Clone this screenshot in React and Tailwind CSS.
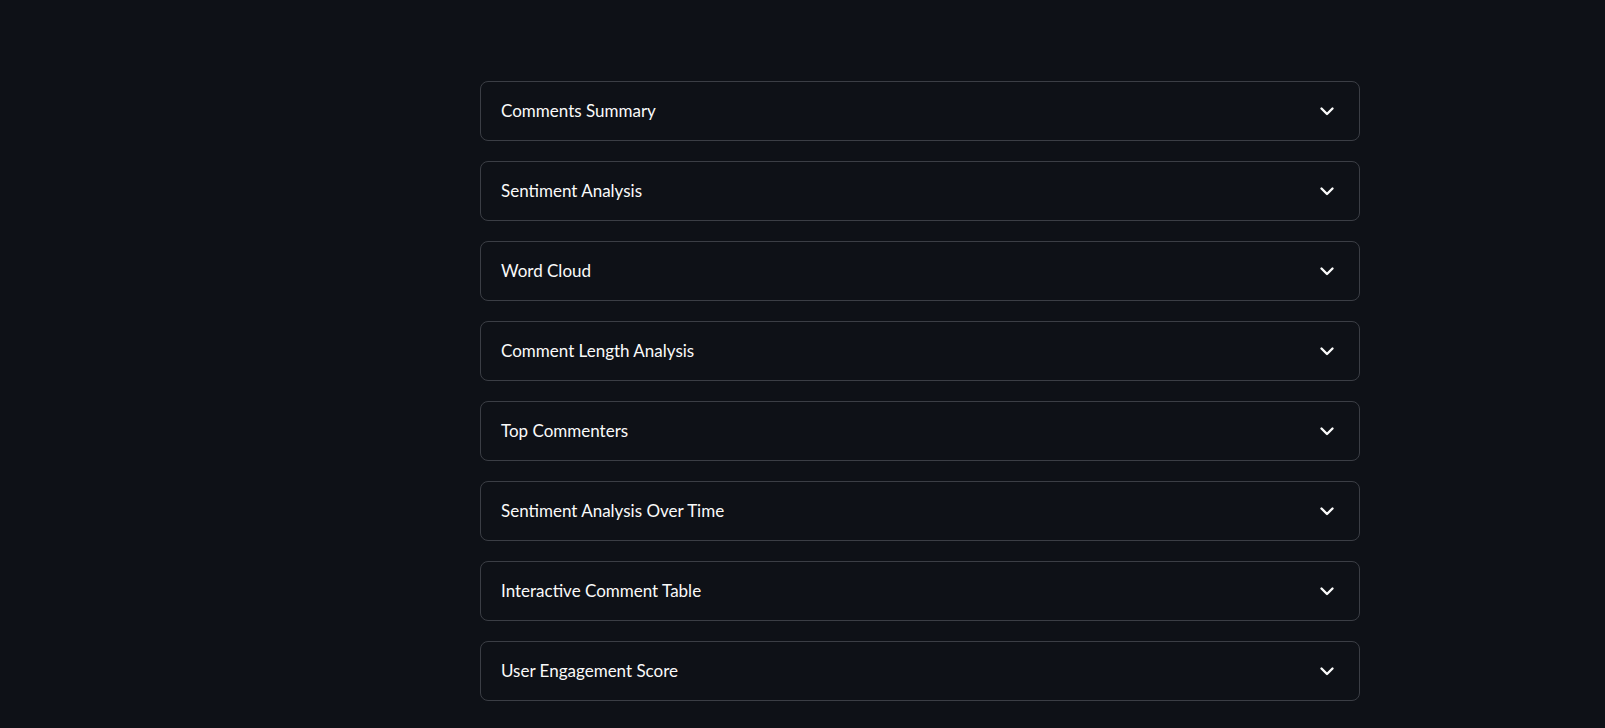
const sections = [
  'Comments Summary',
  'Sentiment Analysis',
  'Word Cloud',
  'Comment Length Analysis',
  'Top Commenters',
  'Sentiment Analysis Over Time',
  'Interactive Comment Table',
  'User Engagement Score',
]

function Chevron() {
  return (
    <svg width="24" height="24" viewBox="0 0 24 24" fill="none" stroke="currentColor" strokeWidth="2.4" strokeLinecap="round" strokeLinejoin="round">
      <path d="m6.5 9.5 5.5 5.5 5.5-5.5" />
    </svg>
  )
}

// Collapsed expander rows, Streamlit dark theme.
export default function App() {
  return (
    <div className="min-h-screen bg-[#0e1117] pt-[81px] text-[#fafafa]" style={{ fontFamily: 'Lato, "Open Sans", sans-serif' }}>
      <div className="ml-[480px] flex w-[880px] flex-col gap-5">
        {sections.map((s) => (
          <div key={s} className="flex h-[60px] items-center justify-between rounded-lg border border-[#3b3e45] pl-[20px] pr-[20px]">
            <span className="text-[17px] font-normal">{s}</span>
            <Chevron />
          </div>
        ))}
      </div>
    </div>
  )
}
